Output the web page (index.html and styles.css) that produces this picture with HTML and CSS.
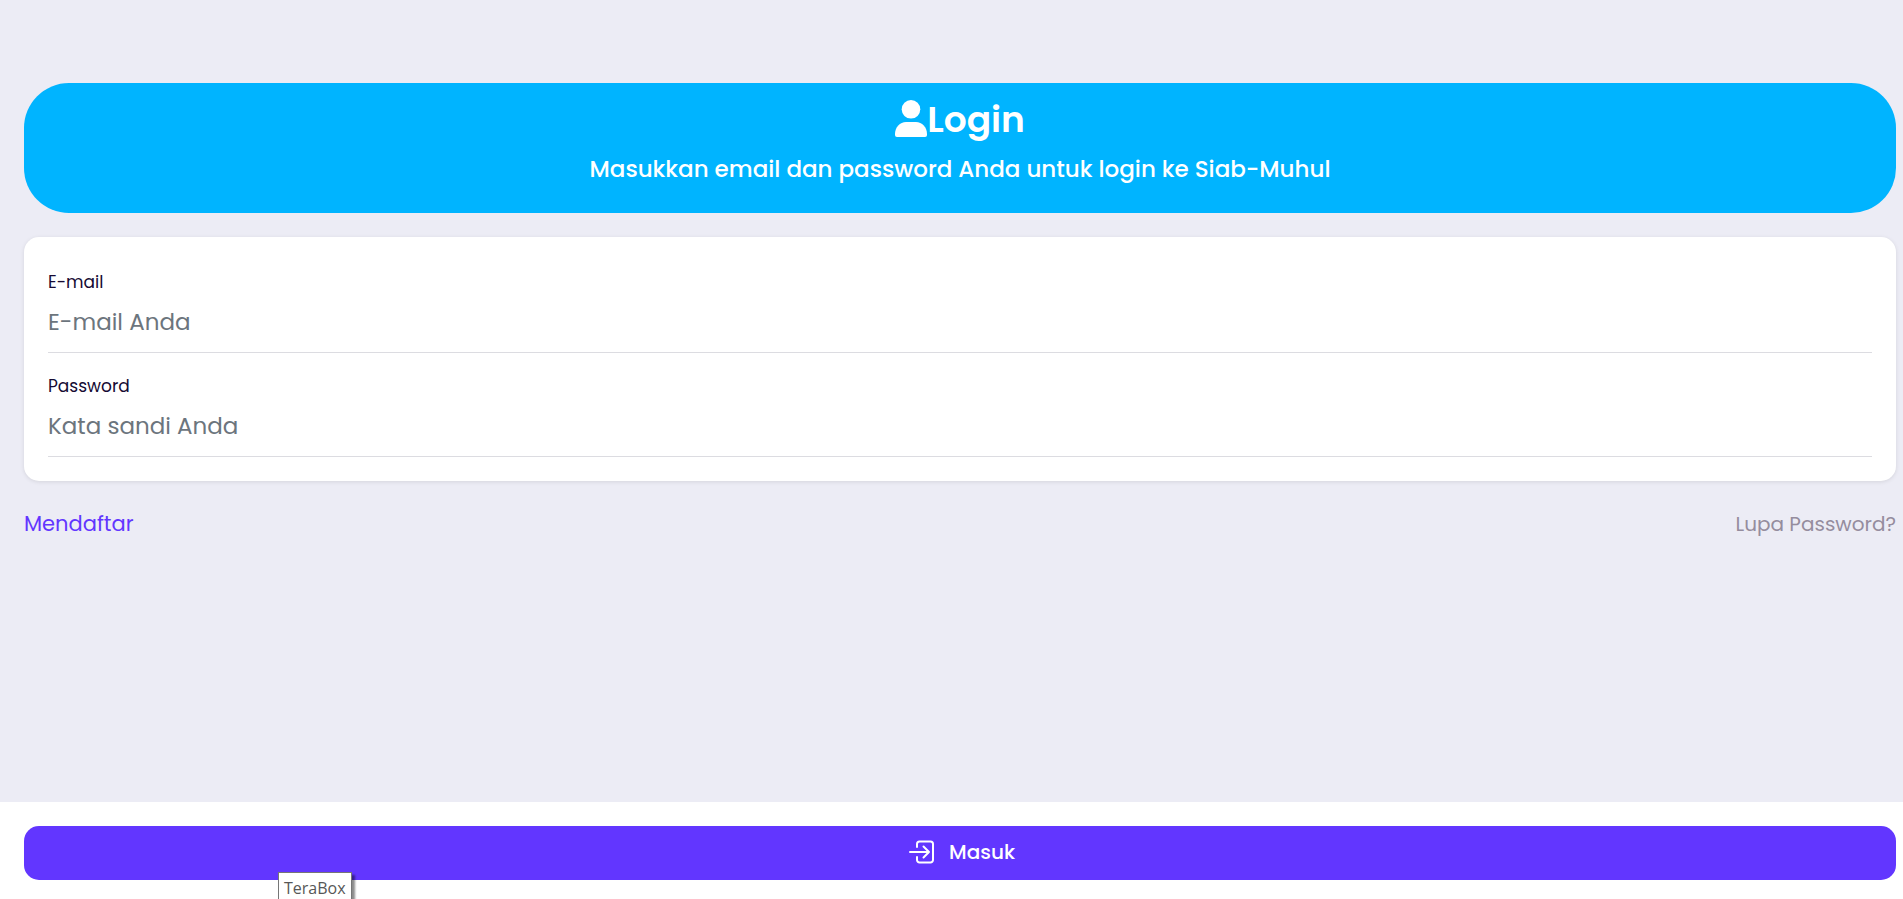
FILE: index.html
```html
<!DOCTYPE html>
<html lang="id">
<head>
  <meta charset="UTF-8">
  <meta name="viewport" content="width=device-width, initial-scale=1.0">
  <link rel="stylesheet" href="styles.css">
  <title>Login</title>
</head>
<body>
  <form class="page">
    <main class="content">
      <header class="banner">
        <h1 class="banner-title">
          <svg class="user-icon" viewBox="0 0 32 37" aria-hidden="true">
            <circle cx="16" cy="9.3" r="9.3" />
            <path d="M11 22h10c6 0 11 5 11 12v1a2 2 0 0 1-2 2H2a2 2 0 0 1-2-2v-1c0-7 5-12 11-12z" />
          </svg>
          Login
        </h1>
        <p class="banner-text">Masukkan email dan password Anda untuk login ke Siab-Muhul</p>
      </header>

      <div class="card">
        <div class="field">
          <label for="email">E-mail</label>
          <input type="email" id="email" placeholder="E-mail Anda">
        </div>
        <div class="field">
          <label for="password">Password</label>
          <input type="password" id="password" placeholder="Kata sandi Anda">
        </div>
      </div>

      <nav class="links">
        <a class="register" href="#">Mendaftar</a>
        <a class="forgot" href="#">Lupa Password?</a>
      </nav>
    </main>

    <div class="bottom-bar">
      <button type="submit" class="submit">
        <svg class="enter-icon" viewBox="0 0 26 26" aria-hidden="true">
          <path d="M8 8V5a2.500 2.500 0 0 1 2.500-2.500h11A2.500 2.500 0 0 1 24 5v16a2.500 2.500 0 0 1-2.500 2.500h-11A2.500 2.500 0 0 1 8 21v-3" />
          <path d="M1 13h19M14.500 7.500L20 13l-5.500 5.500" />
        </svg>
        Masuk
      </button>
      <div class="tooltip">TeraBox</div>
    </div>
  </form>
</body>
</html>
```
FILE: styles.css
```css
* {
  box-sizing: border-box;
}

body {
  margin: 0;
  font-family: Poppins, Inter, sans-serif;
  background-color: #ececf5;
}

.page {
  display: flex;
  flex-direction: column;
  min-height: 100vh;
}

.content {
  flex: 1;
  padding: 83px 7px 24px 24px;
}

.banner {
  padding: 14px 24px 29px;
  border-radius: 45px;
  background-color: #00b4ff;
  color: #fff;
  text-align: center;
}

.banner-title {
  display: flex;
  justify-content: center;
  align-items: center;
  margin: 0 0 11px;
  font-size: 36px;
  font-weight: 600;
  line-height: 46px;
}

.user-icon {
  width: 32px;
  height: 37px;
  margin-bottom: 4px;
  fill: #fff;
}

.banner-text {
  margin: 0;
  font-size: 23px;
  font-weight: 500;
  line-height: 30px;
}

.card {
  display: flex;
  flex-direction: column;
  gap: 12px;
  margin-top: 24px;
  padding: 24px;
  border-radius: 15px;
  background-color: #fff;
  box-shadow: 0 1px 4px rgba(0, 0, 0, 0.1);
}

.field {
  display: flex;
  flex-direction: column;
  padding-top: 9px;
}

.field label {
  color: #160b33;
  font-size: 17px;
  line-height: 24px;
}

.field input {
  width: 100%;
  height: 59px;
  padding: 0 0 2px;
  border: none;
  border-bottom: 1px solid #dcdce1;
  background: transparent;
  color: #160b33;
  font-family: inherit;
  font-size: 23px;
  outline: none;
}

.field input::placeholder {
  color: #6c757d;
  opacity: 1;
}

.links {
  display: flex;
  justify-content: space-between;
  align-items: center;
  margin-top: 28px;
  line-height: 30px;
}

.links a {
  text-decoration: none;
}

.register {
  color: #6236ff;
  font-size: 21px;
}

.forgot {
  color: #958d9e;
  font-size: 20px;
}

.bottom-bar {
  position: relative;
  padding: 24px 7px 19px 24px;
  background-color: #fff;
}

.submit {
  display: flex;
  justify-content: center;
  align-items: center;
  gap: 14px;
  width: 100%;
  height: 54px;
  padding: 0 0 2px 4px;
  border: none;
  border-radius: 15px;
  background-color: #6236ff;
  color: #fff;
  font-family: inherit;
  font-size: 20px;
  font-weight: 500;
}

.enter-icon {
  width: 26px;
  height: 26px;
  fill: none;
  stroke: #fff;
  stroke-width: 2;
  stroke-linecap: round;
  stroke-linejoin: round;
}

/* hangs over the lower edge of the button */
.tooltip {
  position: absolute;
  left: 278px;
  bottom: 0;
  padding: 4px 5px 0;
  border: 1px solid #767676;
  border-bottom: none;
  background-color: #fff;
  box-shadow: 3px 3px 2px rgba(0, 0, 0, 0.45);
  color: #575757;
  font-family: "Segoe UI", "Open Sans", sans-serif;
  font-size: 16px;
  line-height: 22px;
}
```
